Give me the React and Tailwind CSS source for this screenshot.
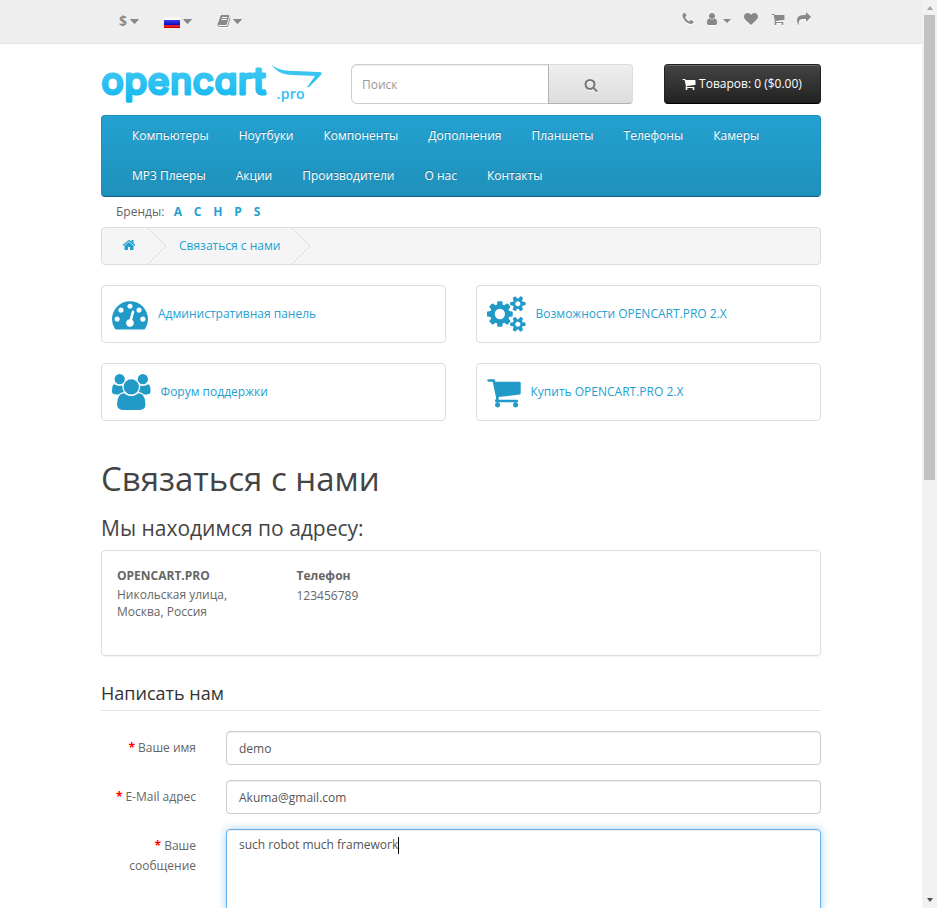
const PATHS = {
  search:
    "M1216 832q0-185-131.5-316.5t-316.5-131.5-316.5 131.5-131.5 316.5 131.5 316.5 316.5 131.5 316.5-131.5 131.5-316.5zm512 832q0 52-38 90t-90 38q-54 0-90-38l-343-342q-179 124-399 124-143 0-273.5-55.5t-225-150-150-225-55.5-273.5 55.5-273.5 150-225 225-150 273.5-55.5 273.5 55.5 225 150 150 225 55.5 273.5q0 220-124 399l343 343q37 37 37 90z",
  home:
    "M1472 992v480q0 26-19 45t-45 19h-384v-384h-256v384h-384q-26 0-45-19t-19-45v-480q0-1 .5-3t.5-3l575-474 575 474q1 2 1 6zm223-69l-62 74q-8 9-21 11h-3q-13 0-21-7l-692-577-692 577q-12 8-24 7-13-2-21-11l-62-74q-8-10-7-23.5t11-21.5l719-599q32-26 76-26t76 26l244 204v-195q0-14 9-23t23-9h192q14 0 23 9t9 23v408l219 182q10 8 11 21.5t-7 23.5z",
  phone:
    "M1600 1240q0 27-10 70.5t-21 68.5q-21 50-122 106-94 51-186 51-27 0-52.5-3.5t-57.5-12.5-47.5-14.5-55.5-20.5-49-18q-98-35-175-83-128-79-264.5-215.5t-215.5-264.5q-48-77-83-175-3-9-18-49t-20.5-55.5-14.5-47.5-12.5-57.5-3.5-52.5q0-92 51-186 56-101 106-122 25-11 68.5-21t70.5-10q14 0 21 3 18 6 53 76 11 19 30 54t35 63.5 31 53.5q3 4 17.5 25t21.5 35.5 7 28.5q0 20-28.5 50t-62 55-62 53-28.5 46q0 9 5 22.5t8.5 20.5 14 24 11.5 19q76 137 174 235t235 174q2 1 19 11.5t24 14 20.5 8.5 22.5 5q18 0 46-28.5t53-62 55-62 50-28.5q14 0 28.5 7t35.5 21.5 25 17.5q25 15 53.5 31t63.5 35 54 30q70 35 76 53 3 7 3 21z",
  user:
    "M1536 1399q0 109-62.5 187t-150.5 78h-854q-88 0-150.5-78t-62.5-187q0-85 8.5-160.5t31.5-152 58.5-131 94-89 134.5-34.5q131 128 313 128t313-128q76 0 134.5 34.5t94 89 58.5 131 31.5 152 8.5 160.5zm-256-887q0 159-112.5 271.5t-271.5 112.5-271.5-112.5-112.5-271.5 112.5-271.5 271.5-112.5 271.5 112.5 112.5 271.5z",
  heart:
    "M896 1664q-26 0-44-18l-624-602q-10-8-27.5-26t-55.5-65.5-68-97.5-53.5-121-23.5-138q0-220 127-344t351-124q62 0 126.5 21.5t120 58 95.5 68.5 76 68q36-36 76-68t95.5-68.5 120-58 126.5-21.5q224 0 351 124t127 344q0 221-229 450l-623 600q-18 18-44 18z",
  cart:
    "M704 1536q0 52-38 90t-90 38-90-38-38-90 38-90 90-38 90 38 38 90zm896 0q0 52-38 90t-90 38-90-38-38-90 38-90 90-38 90 38 38 90zm128-1088v512q0 24-16.5 42.5t-40.5 21.5l-1044 122q13 60 13 70 0 16-24 64h920q26 0 45 19t19 45-19 45-45 19h-1024q-26 0-45-19t-19-45q0-11 8-31.5t16-36 21.5-40 15.5-29.5l-177-823h-204q-26 0-45-19t-19-45 19-45 45-19h256q16 0 28.5 6.5t19.5 15.5 13 24.5 8 26 5.5 29.5 4.5 26h1201q26 0 45 19t19 45z",
  share:
    "M1792 640q0 26-19 45l-512 512q-19 19-45 19t-45-19-19-45v-256h-224q-98 0-175.5 6t-154 21.5-133 42.5-105.5 69.5-80 101-48.5 138.5-17.5 181q0 55 5 123 0 6 2.5 23.5t2.5 26.5q0 15-8.5 25t-23.5 10q-16 0-28-17-7-9-13-22t-13.5-30-10.5-24q-127-285-127-451 0-199 53-333 162-403 875-403h224v-256q0-26 19-45t45-19 45 19l512 512q19 19 19 45z",
  gauge:
    "M384 1152q0-53-37.5-90.5t-90.5-37.5-90.5 37.5-37.5 90.5 37.5 90.5 90.5 37.5 90.5-37.5 37.5-90.5zm192-448q0-53-37.5-90.5t-90.5-37.5-90.5 37.5-37.5 90.5 37.5 90.5 90.5 37.5 90.5-37.5 37.5-90.5zm428 481l101-382q6-26-7.5-48.5t-38.5-29.5-48 6.5-30 39.5l-101 382q-60 5-107 43.5t-63 98.5q-20 77 20 146t117 89 146-20 89-117q16-60-6-117t-72-91zm660-33q0-53-37.5-90.5t-90.5-37.5-90.5 37.5-37.5 90.5 37.5 90.5 90.5 37.5 90.5-37.5 37.5-90.5zm-640-640q0-53-37.5-90.5t-90.5-37.5-90.5 37.5-37.5 90.5 37.5 90.5 90.5 37.5 90.5-37.5 37.5-90.5zm448 192q0-53-37.5-90.5t-90.5-37.5-90.5 37.5-37.5 90.5 37.5 90.5 90.5 37.5 90.5-37.5 37.5-90.5zm320 448q0 261-141 483-19 29-54 29h-1402q-35 0-54-29-141-221-141-483 0-182 71-348t191-286 286-191 348-71 348 71 286 191 191 286 71 348z",
  users:
    "M593 896q-162 5-265 128h-134q-82 0-138-40.5t-56-118.5q0-353 124-353 6 0 43.5 21t97.5 42.5 119 21.5q67 0 133-23-5 37-5 66 0 139 81 256zm1071 637q0 120-73 189.5t-194 69.5h-874q-121 0-194-69.5t-73-189.5q0-53 3.5-103.5t14-109 26.5-108.5 43-97.5 62-81 85.5-53.5 111.5-20q10 0 43 21.5t73 48 107 48 135 21.5 135-21.5 107-48 73-48 43-21.5q61 0 111.5 20t85.5 53.5 62 81 43 97.5 26.5 108.5 14 109 3.5 103.5zm-1024-1277q0 106-75 181t-181 75-181-75-75-181 75-181 181-75 181 75 75 181zm704 384q0 159-112.5 271.5t-271.5 112.5-271.5-112.5-112.5-271.5 112.5-271.5 271.5-112.5 271.5 112.5 112.5 271.5zm576 225q0 78-56 118.5t-138 40.5h-134q-103-123-265-128 81-117 81-256 0-29-5-66 66 23 133 23 59 0 119-21.5t97.5-42.5 43.5-21q124 0 124 353zm-128-609q0 106-75 181t-181 75-181-75-75-181 75-181 181-75 181 75 75 181z",
  cogs:
    "M896 896q0-106-75-181t-181-75-181 75-75 181 75 181 181 75 181-75 75-181zm768 512q0-52-38-90t-90-38-90 38-38 90q0 53 37.5 90.5t90.5 37.5 90.5-37.5 37.5-90.5zm0-1024q0-52-38-90t-90-38-90 38-38 90q0 53 37.5 90.5t90.5 37.5 90.5-37.5 37.5-90.5zm-384 421v185q0 10-7 19.5t-16 10.5l-155 24q-11 35-32 76 34 48 90 115 7 11 7 20 0 12-7 19-23 30-82.5 89.5t-78.5 59.5q-11 0-21-7l-115-90q-37 19-77 31-11 108-23 155-7 24-30 24h-186q-11 0-20-7.5t-10-17.5l-23-153q-34-10-75-31l-118 89q-7 7-20 7-11 0-21-8-144-133-144-160 0-9 7-19 10-14 41-53t47-61q-23-44-35-82l-152-24q-10-1-17-9.5t-7-19.5v-185q0-10 7-19.5t16-10.5l155-24q11-35 32-76-34-48-90-115-7-11-7-20 0-12 7-20 22-30 82-89t79-59q11 0 21 7l115 90q34-18 77-32 11-108 23-154 7-24 30-24h186q11 0 20 7.5t10 17.5l23 153q34 10 75 31l118-89q8-7 20-7 11 0 21 8 144 133 144 160 0 8-7 19-12 16-42 54t-45 60q23 48 34 82l152 23q10 2 17 10.5t7 19.5zm640 533v140q0 16-149 31-12 27-30 52 51 113 51 138 0 4-4 7-122 71-124 71-8 0-46-47t-52-68q-20 2-30 2t-30-2q-14 21-52 68t-46 47q-2 0-124-71-4-3-4-7 0-25 51-138-18-25-30-52-149-15-149-31v-140q0-16 149-31 13-29 30-52-51-113-51-138 0-4 4-7 4-2 35-20t59-34 30-16q8 0 46 46.5t52 67.5q20-2 30-2t30 2q51-71 92-112l6-2q4 0 124 70 4 3 4 7 0 25-51 138 17 23 30 52 149 15 149 31zm0-1024v140q0 16-149 31-12 27-30 52 51 113 51 138 0 4-4 7-122 71-124 71-8 0-46-47t-52-68q-20 2-30 2t-30-2q-14 21-52 68t-46 47q-2 0-124-71-4-3-4-7 0-25 51-138-18-25-30-52-149-15-149-31v-140q0-16 149-31 13-29 30-52-51-113-51-138 0-4 4-7 4-2 35-20t59-34 30-16q8 0 46 46.5t52 67.5q20-2 30-2t30 2q51-71 92-112l6-2q4 0 124 70 4 3 4 7 0 25-51 138 17 23 30 52 149 15 149 31z",
  book:
    "M1703 478q40 57 18 129l-275 906q-19 64-76.5 107.5t-122.5 43.5h-923q-77 0-148.5-53.5t-99.5-131.5q-24-67-2-127 0-4 3-27t4-37q1-8-3-21.5t-3-19.5q2-11 8-21t16.5-23.5 16.5-23.5q23-38 45-91.5t30-91.5q3-10 .5-30t-.5-28q3-11 17-28t17-23q21-36 42-92t25-90q1-9-2.5-32t.5-28q4-13 22-30.5t22-22.5q19-26 42.5-84.5t27.5-96.5q1-8-3-25.5t-2-26.5q2-8 9-18t18-23 17-21q8-12 16.5-30.5t15-35 16-36 19.5-32 26.5-23.5 36-11.5 47.5 5.5l-1 3q38-9 51-9h761q74 0 114 56t18 130l-274 906q-36 119-71.5 153.5t-128.5 34.5h-869q-27 0-38 15-11 16-1 43 24 70 144 70h923q29 0 56-15.5t35-41.5l300-987q7-22 5-57 38 15 59 43zm-1064 2q-4 13 2 22.5t20 9.5h608q13 0 25.5-9.5t16.5-22.5l21-64q4-13-2-22.5t-20-9.5h-608q-13 0-25.5 9.5t-16.5 22.5zm-83 256q-4 13 2 22.5t20 9.5h608q13 0 25.5-9.5t16.5-22.5l21-64q4-13-2-22.5t-20-9.5h-608q-13 0-25.5 9.5t-16.5 22.5z",
};

function Icon({ name, wide = false, className = "size-3.5" }) {
  return (
    <svg
      viewBox={wide ? "0 0 1920 1792" : "0 0 1792 1792"}
      fill="currentColor"
      className={"shrink-0 overflow-visible " + className}
    >
      <path d={PATHS[name]} />
    </svg>
  );
}

function Caret({ className = "" }) {
  return (
    <span
      className={
        "h-0 w-0 border-x-4 border-t-4 border-x-transparent border-t-current " + className
      }
    />
  );
}

function WideCaret({ className = "" }) {
  return (
    <svg viewBox="0 0 9 5" fill="currentColor" className={"h-[5px] w-[9px] shrink-0 " + className}>
      <path d="M.7 0h7.600q.7.1.5.700L5 4.700q-.5.4-1 0L.2.700Q0 .1.700 0z" />
    </svg>
  );
}

function TopBar() {
  return (
    <nav className="h-11 border-b border-[#e2e2e2] bg-[#eeeeee] text-[#888]">
      <div className="mx-auto flex h-[42px] w-[720px] items-center pl-[18px] [&_svg]:drop-shadow-[0_1px_0_#fff]">
        <strong className="w-2 text-[14px] leading-5 [text-shadow:0_1px_0_#fff]">$</strong>
        <WideCaret className="ml-[3px]" />
        <span className="mt-[3px] ml-[25px] flex h-[11px] w-4 flex-col">
          <span className="h-[3px] bg-gradient-to-b from-[#f4f4f4] to-white" />
          <span className="h-[5px] bg-gradient-to-b from-[#3d3de0] to-[#0000c0]" />
          <span className="h-[3px] border-b border-[#b00] bg-[#e82020]" />
        </span>
        <WideCaret className="ml-[2.500px]" />
        <Icon name="book" className="ml-[25px] size-3.5" />
        <WideCaret className="ml-[2px]" />
        <div className="mb-[5px] ml-auto flex items-center pr-2.5">
          <Icon name="phone" className="size-3.5" />
          <Icon name="user" className="ml-[10px] size-3.5" />
          <Caret className="mt-1 ml-[4px]" />
          <Icon name="heart" className="ml-[13px] size-3.5" />
          <Icon name="cart" className="ml-[12.5px] size-3.5" />
          <Icon name="share" className="ml-[12.5px] size-3.5" />
        </div>
      </div>
    </nav>
  );
}

function Logo() {
  return (
    <svg viewBox="0 0 222 44" className="h-11 w-[222px] shrink-0 overflow-visible">
      <defs>
        <linearGradient id="logo-blue" gradientUnits="userSpaceOnUse" x1="0" y1="4" x2="0" y2="38">
          <stop offset="0" stopColor="#41c8f2" />
          <stop offset="1" stopColor="#11b8f0" />
        </linearGradient>
      </defs>
      <text
        x="0.5"
        y="30"
        textLength="164"
        lengthAdjust="spacing"
        fill="url(#logo-blue)"
        stroke="url(#logo-blue)"
        strokeWidth="3.2"
        strokeLinejoin="round"
        className="font-[Inter] text-[37px] font-normal [font-feature-settings:'cv11']"
      >
        opencart
      </text>
      <path
        d="M171 1c6 5 14 6 24 6l22 1c5 0 4 2 2 4l-11 11c0 0-3 1-1-1l7-10-22-1c-10 0-18-4-21-10z"
        fill="url(#logo-blue)"
      />
      <text
        x="175.500"
        y="35"
        textLength="28"
        fill="#2cc0f1"
        className="font-['Open_Sans'] text-[14px] font-semibold"
      >
        .pro
      </text>
    </svg>
  );
}

function Header() {
  return (
    <header className="flex h-[71px] items-start pt-5">
      <Logo />
      <div className="ml-7 flex h-10 w-[282px]">
        <div className="flex w-[198px] items-center rounded-l-md border border-[#ccc] px-2.5 pt-0.5 text-[#999] shadow-[inset_0_1px_1px_rgba(0,0,0,0.075)]">
          Поиск
        </div>
        <button className="-ml-px flex w-[85px] items-center justify-center rounded-r border border-[#ddd] border-b-[#b3b3b3] border-l-[#b3b3b3] bg-gradient-to-b from-[#eeeeee] to-[#dddddd] text-[#777]">
          <Icon name="search" className="mt-0.5 size-3.5 drop-shadow-[0_1px_0_#fff]" />
        </button>
      </div>
      <button className="ml-[31px] flex h-10 w-[157px] items-center justify-center gap-[3px] rounded border border-[#222] border-b-black bg-gradient-to-b from-[#444] to-[#222] text-white shadow-[inset_0_1px_0_#666]">
        <Icon name="cart" className="mb-px -ml-px size-3.5" />
        <span className="whitespace-nowrap">Товаров: 0 ($0.00)</span>
      </button>
    </header>
  );
}

const MENU = [
  ["Компьютеры", "Ноутбуки", "Компоненты", "Дополнения", "Планшеты", "Телефоны", "Камеры"],
  ["MP3 Плееры", "Акции", "Производители", "О нас", "Контакты"],
];

function Menu() {
  return (
    <nav className="h-[82px] rounded border border-[#1f90bb] border-b-[#145e7a] bg-gradient-to-b from-[#23a1d1] to-[#1f90bb] pl-[30px] text-white [text-shadow:0_-1px_0_rgba(0,0,0,0.25)]">
      {MENU.map((row, i) => (
        <div key={i} className="flex h-10 items-center gap-[30px] whitespace-nowrap">
          {row.map((item) => (
            <a key={item}>{item}</a>
          ))}
        </div>
      ))}
    </nav>
  );
}

function Chevron() {
  return (
    <svg viewBox="0 0 20 36" className="h-9 w-5 shrink-0" fill="none" stroke="#ddd">
      <path d="M1 0 19 18 1 36" />
    </svg>
  );
}

const CARDS = [
  { icon: "gauge", text: "Административная панель", gap: "gap-[10px]" },
  { icon: "cogs", text: "Возможности OPENCART.PRO 2.X", gap: "gap-[10px]", wide: true },
  { icon: "users", text: "Форум поддержки", gap: "gap-[10px]", wide: true },
  { icon: "cart", text: "Купить OPENCART.PRO 2.X", gap: "gap-[8.500px]" },
];

function Label({ lines }) {
  return (
    <label className="flex w-[95px] shrink-0 flex-col items-end pt-[7px] leading-5">
      {lines.map((line, i) => (
        <span key={line} className="flex gap-[3px]">
          {i === 0 && <span className="font-bold text-[#f00]">*</span>}
          <span>{line}</span>
        </span>
      ))}
    </label>
  );
}

function Field({ label, value }) {
  return (
    <div className="mb-[15px] flex gap-[30px]">
      <Label lines={[label]} />
      <div className="flex h-[34px] flex-1 items-center rounded border border-[#ccc] px-3 pt-0.5 text-[#555] shadow-[inset_0_1px_1px_rgba(0,0,0,0.075)]">
        {value}
      </div>
    </div>
  );
}

export default function App() {
  return (
    <div className="flex h-[908px] w-[937px] overflow-hidden bg-white font-['Open_Sans','Noto_Sans',sans-serif] text-[12px] leading-5 text-[#666]">
      <div className="h-full w-[922px] overflow-hidden">
        <TopBar />
        <main className="mx-auto w-[720px]">
          <Header />
          <Menu />
          <div className="flex h-[30px] items-center pl-[15px]">
            <span>Бренды:</span>
            <div className="ml-[9.500px] flex gap-[11.800px] font-bold text-[#23a1d1]">
              {["A", "C", "H", "P", "S"].map((letter) => (
                <a key={letter}>{letter}</a>
              ))}
            </div>
          </div>
          <div className="flex h-[38px] items-center rounded border border-[#ddd] bg-[#f5f5f5] text-[#23a1d1]">
            <Icon name="home" className="mb-[3px] ml-5 size-3.5" />
            <span className="ml-[10.500px]">
              <Chevron />
            </span>
            <span className="ml-[12.500px] w-[101px] whitespace-nowrap">Связаться с нами</span>
            <span className="ml-[10.500px]">
              <Chevron />
            </span>
          </div>
          <div className="mt-5 grid grid-cols-2 gap-x-[30px] gap-y-5">
            {CARDS.map(({ icon, text, gap, wide }) => (
              <a
                key={icon}
                className={
                  "flex h-[58px] items-center rounded border border-[#ddd] pl-2.5 text-[#23a1d1] " + gap
                }
              >
                <Icon
                  name={icon}
                  wide={wide}
                  className={
                    wide
                      ? "h-9 w-[38.570px] text-[#229ac8]"
                      : icon === "cart"
                        ? "-ml-[1px] h-9 w-9 text-[#229ac8]"
                        : "h-9 w-9 text-[#229ac8]"
                  }
                />
                <span>{text}</span>
              </a>
            ))}
          </div>
          <h1 className="mt-10 text-[33px] leading-9 text-[#444]">Связаться с нами</h1>
          <h3 className="mt-5 text-[21px] leading-[23px] text-[#444]">Мы находимся по адресу:</h3>
          <section className="mt-2.5 flex h-[106px] rounded border border-[#ddd] px-[15px] pt-[15px] shadow-[0_1px_1px_rgba(0,0,0,0.05)]">
            <div className="w-[179.500px]">
              <strong className="block">OPENCART.PRO</strong>
              <address className="leading-[17px] whitespace-pre-line not-italic">
                {"Никольская улица,\nМосква, Россия"}
              </address>
            </div>
            <div>
              <strong className="block">Телефон</strong>
              <span>123456789</span>
            </div>
          </section>
          <h2 className="mt-6 h-[31px] border-b border-[#e5e5e5] text-[18px] leading-[26px] text-[#333]">
            Написать нам
          </h2>
          <form className="mt-5">
            <Field label="Ваше имя" value="demo" />
            <Field label="E-Mail адрес" value="Akuma@gmail.com" />
            <div className="flex gap-[30px]">
              <Label lines={["Ваше", "сообщение"]} />
              <div className="flex h-[214px] flex-1 items-start rounded border border-[#66afe9] px-3 pt-[5px] text-[#555] shadow-[inset_0_1px_1px_rgba(0,0,0,0.075),0_0_8px_rgba(102,175,233,0.6)]">
                <span>such robot much framework</span>
                <span className="mt-0.5 h-[17px] w-px bg-black" />
              </div>
            </div>
          </form>
        </main>
      </div>
      <aside className="flex h-full w-[15px] flex-col items-center bg-[#f1f1f1]">
        <span className="mt-1.5 border-x-[3.5px] border-b-4 border-x-transparent border-b-[#a3a3a3]" />
        <span className="mt-[5px] h-[465px] w-[11px] bg-[#c1c1c1]" />
        <span className="mt-auto mb-1.5 border-x-[3.5px] border-t-4 border-x-transparent border-t-[#505050]" />
      </aside>
    </div>
  );
}
